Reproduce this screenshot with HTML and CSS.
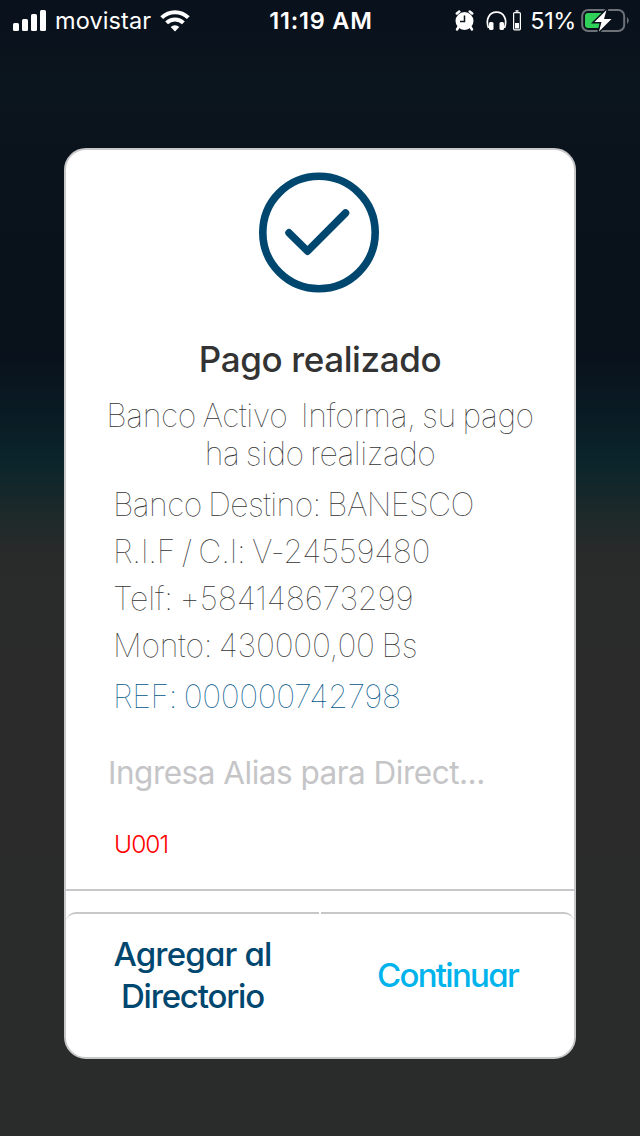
FILE: index.html
```html
<!DOCTYPE html>
<html lang="es">
<head>
<meta charset="utf-8">
<title>Pago realizado</title>
<link rel="stylesheet" href="styles.css">
</head>
<body>
<header class="status">
  <div class="status-left">
    <svg class="signal" width="34" height="22" viewBox="0 0 34 22" fill="#fff"><rect x="0" y="13" width="6" height="8" rx="1.5"/><rect x="9" y="9" width="6" height="12" rx="1.5"/><rect x="18" y="4" width="6" height="17" rx="1.5"/><rect x="27" y="0" width="6" height="21" rx="1.5"/></svg>
    <span class="carrier">movistar</span>
    <svg class="wifi" width="30" height="23" viewBox="0 0 30 23" fill="none" stroke="#fff" stroke-width="4"><path d="M1.7 8.6a19 19 0 0 1 26.600 0"/><path d="M6.600 13.900a12 12 0 0 1 16.800 0"/><path d="M15 22.500l-4.300-4.500a6.300 6.300 0 0 1 8.600 0z" fill="#fff" stroke="none"/></svg>
  </div>
  <span class="clock">11:19 AM</span>
  <div class="status-right">
    <svg class="alarm" width="19" height="22" viewBox="0 0 19 22"><g stroke="#fff" stroke-width="2.500" stroke-linecap="round"><path d="M3.500 17l-1.500 2.500M15.500 17l1.500 2.500"/><path d="M1.800 3.500l2.500-2M17.200 3.500l-2.500-2"/></g><circle cx="9.500" cy="11" r="9" fill="#fff"/><path d="M9.500 5.500v6H5" fill="none" stroke="#0b151e" stroke-width="1.500"/></svg>
    <svg class="phones" width="21" height="20" viewBox="0 0 21 20"><path d="M2.500 17C-.8 8 3.500 1.200 10.500 1.200S21.800 8 18.500 17" fill="none" stroke="#fff" stroke-width="1.700"/><rect x="3" y="11" width="4.500" height="8" rx="1.500" fill="#fff"/><rect x="13.500" y="11" width="4.500" height="8" rx="1.500" fill="#fff"/></svg>
    <svg class="device" width="8" height="21" viewBox="0 0 8 21"><path d="M2.500 1h3" stroke="#fff" stroke-width="1.500"/><rect x=".6" y="2.600" width="6.800" height="17.200" rx="1" fill="none" stroke="#fff" stroke-width="1.200"/><rect x="2" y="13" width="4" height="5.500" fill="#fff"/></svg>
    <span class="percent">51%</span>
    <svg class="battery" width="49" height="25" viewBox="0 0 49 25"><rect x="2.200" y="2" width="42" height="21" rx="6" fill="none" stroke="#6d7278" stroke-width="2"/><path d="M47 9q3.500 3.500 0 7z" fill="#6d7278"/><path d="M8 5h15V20H8q-3 0-3-3V8q0-3 3-3z" fill="#30d158"/><path d="M26.500 2L14.500 14H21.500L19 23.500L31.500 11H24z" fill="#fff" stroke="#0b121c" stroke-width="3" paint-order="stroke"/></svg>
  </div>
</header>
<main class="card">
  <svg class="check" width="120" height="121" viewBox="0 0 120 121" fill="none" stroke="#00476f"><circle cx="60" cy="60.500" r="56.200" stroke-width="7.600"/><path d="M30 60.800L48.500 79.200L86.500 41" stroke-width="7.500" stroke-linecap="round" stroke-linejoin="round"/></svg>
  <h1 class="title">Pago realizado</h1>
  <p class="message"><span class="m1">Banco Activo&nbsp; Informa, su pago</span><br><span class="m2">ha sido realizado</span></p>
  <div class="details">
    <div class="row d1">Banco Destino: BANESCO</div>
    <div class="row d2">R.I.F / C.I: V-24559480</div>
    <div class="row d3">Telf: +584148673299</div>
    <div class="row d4">Monto: 430000,00 Bs</div>
    <div class="row ref">REF: 000000742798</div>
  </div>
  <div class="alias">Ingresa Alias para Direct...</div>
  <div class="code">U001</div>
  <footer class="actions">
    <div class="action add"><span>Agregar al<br><span class="dir">Directorio</span></span></div>
    <div class="action next">Continuar</div>
  </footer>
</main>
</body>
</html>
```
FILE: styles.css
```css
* { box-sizing: border-box; }
body {
  margin: 0;
  height: 1136px;
  overflow: hidden;
  font-family: Inter, "Liberation Sans", sans-serif;
  background: linear-gradient(#09111c 0, #0b151d 90px, #0a121b 180px, #09111b 350px, #091a23 410px, #0b252b 465px, #1c292a 510px, #292a2a 555px, #2b2b2b 700px, #2a2b2b 1136px);
}
svg { display: block; flex: none; }
.status {
  height: 40px;
  padding: 0 11px 0 13px;
  display: grid;
  grid-template-columns: 1fr auto 1fr;
  align-items: center;
  color: #fff;
  font-size: 23.5px;
  line-height: 41px;
  white-space: nowrap;
}
.status-left, .status-right { display: flex; align-items: center; }
.status-right { justify-content: flex-end; }
.carrier { margin: 0 9px 0 8px; letter-spacing: .1px; }
.clock { font-weight: 600; letter-spacing: .8px; }
.phones { margin-left: 12px; }
.device { margin: 0 9px 0 6px; }
.percent { margin-right: 4px; letter-spacing: -.4px; }
.card {
  width: 512px;
  height: 911px;
  margin: 108px auto 0;
  padding-top: 22px;
  border: 2px solid #c8c8ca;
  border-radius: 22px;
  background: #fff;
  color: #333;
  display: flex;
  flex-direction: column;
  white-space: nowrap;
}
.check { margin-left: 193px; }
.title {
  margin: 46px 0 0;
  font-size: 35px;
  line-height: 40px;
  font-weight: 500;
  letter-spacing: -.38px;
  text-align: center;
}
.message {
  margin: 18px 0 0;
  font-size: 32px;
  line-height: 38px;
  font-weight: 100;
  word-spacing: -2px;
  text-align: center;
}
.m1 { letter-spacing: -.37px; }
.m2 { letter-spacing: -.5px; }
.details {
  padding: 8px 0 0 47px;
  font-size: 32px;
  line-height: 47px;
  font-weight: 100;
  word-spacing: -2px;
}
.row { width: fit-content; }
.d1 { letter-spacing: -.6px; }
.d2 { letter-spacing: -.33px; }
.d3 { letter-spacing: -.15px; }
.d4 { letter-spacing: -.25px; }
.ref { margin-top: 4px; letter-spacing: -.4px; color: #00568a; }
.alias {
  margin: 33px 0 0 42px;
  width: fit-content;
  font-size: 31.5px;
  line-height: 40px;
  letter-spacing: -.5px;
  color: #c5c5c7;
}
.code {
  margin: 36px 0 0 48px;
  width: fit-content;
  font-size: 24.5px;
  line-height: 30px;
  font-weight: 300;
  letter-spacing: -.9px;
  color: #f00;
}
.actions {
  margin-top: 30px;
  padding-top: 21px;
  border-top: 2px solid #c8c8ca;
  display: grid;
  grid-template-columns: 1fr 1fr;
  gap: 2px;
}
.action {
  height: 124px;
  border-top: 2px solid #c8c8ca;
  display: flex;
  align-items: center;
  justify-content: center;
  text-align: center;
  font-size: 33px;
  line-height: 42px;
  font-weight: 500;
  font-feature-settings: "cv11" 1;
  letter-spacing: -.8px;
}
.dir { letter-spacing: -1.2px; }
.add { border-top-left-radius: 10px; color: #00476f; }
.next { border-top-right-radius: 10px; letter-spacing: -1.7px; color: #00b3ec; }
```
